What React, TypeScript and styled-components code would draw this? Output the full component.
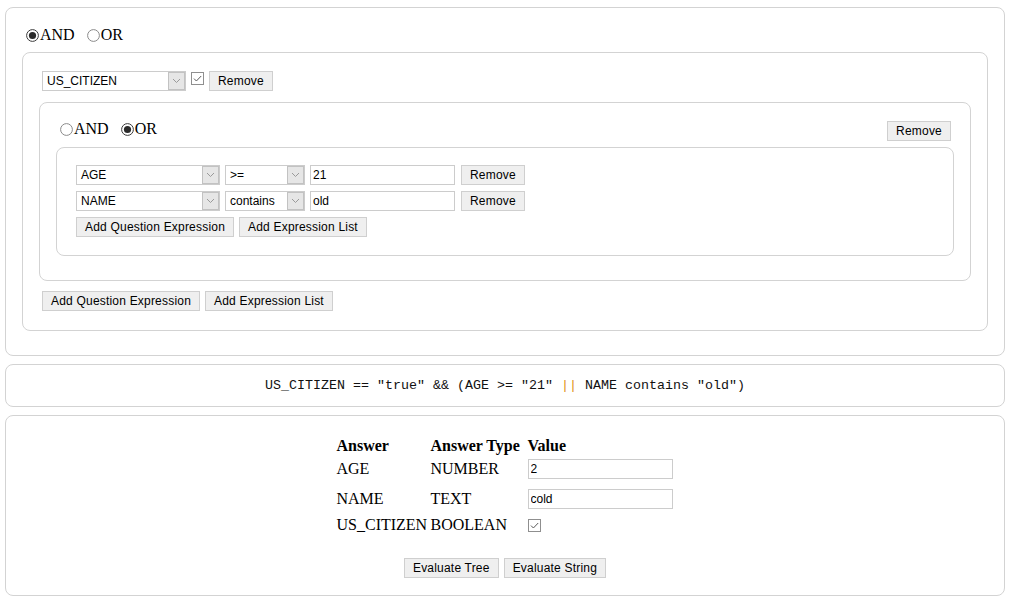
import React from "react";
import styled, { createGlobalStyle } from "styled-components";

const GlobalStyle = createGlobalStyle`
  html, body { margin: 0; padding: 0; background: #ffffff; }
  body { font-family: "Liberation Serif", "Times New Roman", serif; color: #000; }
`;

type Question = { type: "q"; field: string; op?: string; value: string | boolean; kind: "boolean" | "value" };
type ListNode = { type: "list"; op: "AND" | "OR"; children: Node[] };
type Node = Question | ListNode;

const tree: ListNode = {
  type: "list",
  op: "AND",
  children: [
    { type: "q", field: "US_CITIZEN", kind: "boolean", value: true },
    {
      type: "list",
      op: "OR",
      children: [
        { type: "q", field: "AGE", op: ">=", value: "21", kind: "value" },
        { type: "q", field: "NAME", op: "contains", value: "old", kind: "value" },
      ],
    },
  ],
};

const answers = [
  { name: "AGE", type: "NUMBER", value: "2", kind: "text" },
  { name: "NAME", type: "TEXT", value: "cold", kind: "text" },
  { name: "US_CITIZEN", type: "BOOLEAN", value: "true", kind: "check" },
];

const Page = styled.div`
  display: flex;
  flex-direction: column;
  gap: 8px;
  padding: 7px 9px 8px 5px;
  width: 1000px;
`;

const Card = styled.div`
  border: 1px solid #d3d3d3;
  border-radius: 8px;
  background: #fff;
`;

const ListPanel = styled.div<{ $nested?: boolean }>`
  border: 1px solid #d3d3d3;
  border-radius: 8px;
  padding: 16px 16px 24px;
  margin: ${(p) => (p.$nested ? "5px 0 4px" : "0")};
`;

const ListHeader = styled.div<{ $nested?: boolean }>`
  display: flex;
  justify-content: space-between;
  align-items: flex-start;
  height: ${(p) => (p.$nested ? 28 : 27)}px;
  padding-top: ${(p) => (p.$nested ? 0 : 1)}px;
`;

const RadioGroup = styled.div`
  display: flex;
  align-items: center;
  gap: 8px;
  height: 20px;
`;

const RadioOption = styled.label`
  display: inline-flex;
  align-items: center;
  gap: 1px;
  font-family: "Liberation Serif", "Times New Roman", serif;
  font-size: 16px;
  line-height: 18px;
  color: #000;
  svg { margin-left: 4px; display: block; }
`;

const ChildrenBox = styled.div<{ $depth: number }>`
  display: flex;
  flex-direction: column;
  gap: 6px;
  border: 1px solid #d3d3d3;
  border-radius: 8px;
  padding: ${(p) => (p.$depth === 0 ? "18px 16px 19px" : "17px 16px 18px")};
`;

const Row = styled.div`
  display: flex;
  align-items: center;
  gap: 5px;
  padding-left: 3px;
  height: 20px;
`;

const SelectBox = styled.div<{ $w: number }>`
  box-sizing: border-box;
  display: flex;
  align-items: stretch;
  width: ${(p) => p.$w}px;
  height: 20px;
  border: 1px solid #cccccc;
  background: #fff;
  font-family: "Liberation Sans", Arial, sans-serif;
  font-size: 12px;
  color: #000;
`;

const SelectText = styled.span`
  flex: 1;
  display: flex;
  align-items: center;
  padding-left: 4px;
  white-space: nowrap;
  overflow: hidden;
`;

const ArrowBox = styled.span`
  box-sizing: border-box;
  width: 17px;
  display: flex;
  align-items: center;
  justify-content: center;
  background: #e6e6e6;
  border: 1px solid #c2c2c2;
`;

const TextInput = styled.input`
  box-sizing: border-box;
  width: 145px;
  height: 20px;
  margin: 0;
  padding: 0 2px;
  border: 1px solid #cccccc;
  outline: none;
  background: #fff;
  font-family: "Liberation Sans", Arial, sans-serif;
  font-size: 12px;
  color: #000;
`;

const Button = styled.button<{ $top?: number; $left?: number }>`
  box-sizing: border-box;
  height: 20px;
  margin: ${(p) => (p.$top ? `${p.$top}px 3px 0 0` : `0 0 0 ${p.$left ?? 0}px`)};
  padding: 0 8px;
  border: 1px solid #cfcfcf;
  background: #efefef;
  font-family: "Liberation Sans", Arial, sans-serif;
  font-size: 12px;
  letter-spacing: 0.2px;
  color: #000;
  line-height: 18px;
  white-space: nowrap;
`;

const CheckWrap = styled.span<{ $offset?: number }>`
  display: inline-flex;
  align-self: ${(p) => (p.$offset !== undefined ? "flex-start" : "center")};
  margin-top: ${(p) => p.$offset ?? 0}px;
  svg { display: block; }
`;

const ExprCard = styled(Card)`
  padding: 12px;
  text-align: center;
  font-family: "Liberation Mono", "Courier New", monospace;
  font-size: 13.33px;
  line-height: 17px;
  color: #111;
  white-space: pre;
`;

const OrOp = styled.span`
  color: #e0901c;
`;

const AnswerCard = styled(Card)`
  padding: 18px 0 17px;
  display: flex;
  flex-direction: column;
  align-items: center;
`;

const AnswerGrid = styled.div`
  display: grid;
  grid-template-columns: 94px 97px 146px;
  grid-template-rows: 22px 26px 34px 18px;
  align-items: center;
  font-family: "Liberation Serif", "Times New Roman", serif;
  font-size: 16px;
  line-height: 18px;
  color: #000;
`;

const HeadCell = styled.div`
  font-weight: bold;
  white-space: nowrap;
  padding-top: 1px;
`;

const Cell = styled.div`
  white-space: nowrap;
  display: flex;
  align-items: center;
`;

const EvalRow = styled.div`
  display: flex;
  gap: 5px;
  margin-top: 24px;
`;

function Radio({ checked }: { checked: boolean }) {
  return (
    <svg width="13" height="13" viewBox="0 0 13 13">
      <circle cx="6.5" cy="6.5" r="5.9" fill="#fff" stroke={checked ? "#3a3a3a" : "#8a8a8a"} strokeWidth="1" />
      {checked && <circle cx="6.5" cy="6.5" r="3.6" fill="#2a2a2a" />}
    </svg>
  );
}

function Checkbox({ offset }: { offset?: number }) {
  return (
    <CheckWrap $offset={offset}>
      <svg width="13" height="13" viewBox="0 0 13 13">
        <rect x="0.5" y="0.5" width="12" height="12" fill="#fff" stroke="#8f8f8f" />
        <path d="M3 6.6 L5.4 9 L10.2 4" fill="none" stroke="#5a5a5a" strokeWidth="1" />
      </svg>
    </CheckWrap>
  );
}

function Select({ value, width }: { value: string; width: number }) {
  return (
    <SelectBox $w={width}>
      <SelectText>{value}</SelectText>
      <ArrowBox>
        <svg width="9" height="6" viewBox="0 0 9 6">
          <path d="M1 1 L4.5 4.5 L8 1" fill="none" stroke="#9a9a9a" strokeWidth="1" />
        </svg>
      </ArrowBox>
    </SelectBox>
  );
}

function QuestionRow({ q }: { q: Question }) {
  if (q.kind === "boolean") {
    return (
      <Row>
        <Select value={q.field} width={144} />
        <Checkbox offset={1} />
        <Button>Remove</Button>
      </Row>
    );
  }
  return (
    <Row>
      <Select value={q.field} width={144} />
      <Select value={q.op ?? ""} width={80} />
      <TextInput defaultValue={String(q.value)} />
      <Button $left={1}>Remove</Button>
    </Row>
  );
}

function ExpressionList({ node, depth }: { node: ListNode; depth: number }) {
  return (
    <ListPanel $nested={depth > 0}>
      <ListHeader $nested={depth > 0}>
        <RadioGroup>
          <RadioOption>
            <Radio checked={node.op === "AND"} />
            AND
          </RadioOption>
          <RadioOption>
            <Radio checked={node.op === "OR"} />
            OR
          </RadioOption>
        </RadioGroup>
        {depth > 0 && <Button $top={2}>Remove</Button>}
      </ListHeader>
      <ChildrenBox $depth={depth}>
        {node.children.map((c, i) =>
          c.type === "list" ? (
            <ExpressionList key={i} node={c} depth={depth + 1} />
          ) : (
            <QuestionRow key={i} q={c} />
          )
        )}
        <Row>
          <Button>Add Question Expression</Button>
          <Button>Add Expression List</Button>
        </Row>
      </ChildrenBox>
    </ListPanel>
  );
}

export default function App() {
  return (
    <>
      <GlobalStyle />
      <Page>
        <ExpressionList node={tree} depth={0} />
        <ExprCard>
          {'US_CITIZEN == "true" && (AGE >= "21" '}
          <OrOp>||</OrOp>
          {' NAME contains "old")'}
        </ExprCard>
        <AnswerCard>
          <AnswerGrid>
            <HeadCell>Answer</HeadCell>
            <HeadCell>Answer Type</HeadCell>
            <HeadCell>Value</HeadCell>
            {answers.map((a) => (
              <React.Fragment key={a.name}>
                <Cell>{a.name}</Cell>
                <Cell>{a.type}</Cell>
                <Cell>{a.kind === "check" ? <Checkbox /> : <TextInput defaultValue={a.value} />}</Cell>
              </React.Fragment>
            ))}
          </AnswerGrid>
          <EvalRow>
            <Button>Evaluate Tree</Button>
            <Button>Evaluate String</Button>
          </EvalRow>
        </AnswerCard>
      </Page>
    </>
  );
}
